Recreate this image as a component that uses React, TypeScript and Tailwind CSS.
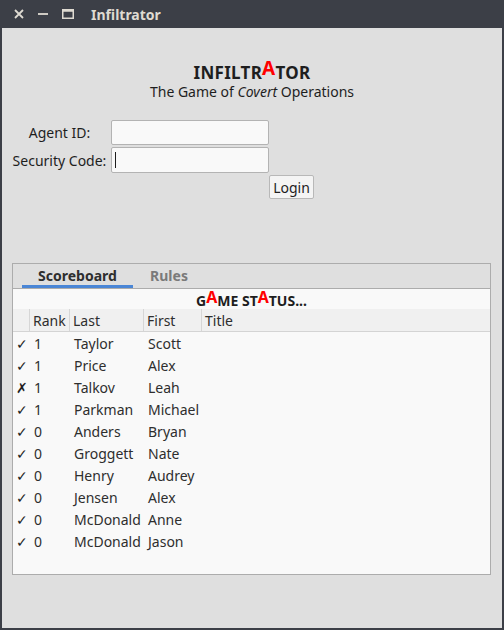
import React from "react";

const rows = [
  { ok: true, rank: "1", last: "Taylor", first: "Scott" },
  { ok: true, rank: "1", last: "Price", first: "Alex" },
  { ok: false, rank: "1", last: "Talkov", first: "Leah" },
  { ok: true, rank: "1", last: "Parkman", first: "Michael" },
  { ok: true, rank: "0", last: "Anders", first: "Bryan" },
  { ok: true, rank: "0", last: "Groggett", first: "Nate" },
  { ok: true, rank: "0", last: "Henry", first: "Audrey" },
  { ok: true, rank: "0", last: "Jensen", first: "Alex" },
  { ok: true, rank: "0", last: "McDonald", first: "Anne" },
  { ok: true, rank: "0", last: "McDonald", first: "Jason" },
];

export default function App() {
  return (
    <div
      className="w-[504px] h-[630px] bg-[#3c3f47] flex flex-col text-[#3c3c3c]"
      style={{ fontFamily: '"Noto Sans", "Open Sans", sans-serif' }}
    >
      {/* title bar */}
      <div className="h-[28px] flex items-center text-[#dfdbd2] shrink-0">
        <svg width="12" height="12" viewBox="0 0 12 12" className="ml-[13px]">
          <path d="M2 2L10 10M10 2L2 10" stroke="#dfdbd2" strokeWidth="1.8" />
        </svg>
        <svg width="12" height="12" viewBox="0 0 12 12" className="ml-[12px]">
          <path d="M1 6H11" stroke="#dfdbd2" strokeWidth="1.8" />
        </svg>
        <svg width="12" height="12" viewBox="0 0 12 12" className="ml-[13px]">
          <rect x="0.75" y="1.75" width="10.5" height="8.5" fill="none" stroke="#dfdbd2" strokeWidth="1.5" />
          <rect x="0.75" y="1.75" width="10.5" height="2" fill="#dfdbd2" />
        </svg>
        <span className="ml-[17px] text-[14px] font-bold">Infiltrator</span>
      </div>

      <div className="flex-1 mx-[2px] mb-[2px] bg-[#dfdfdf] flex flex-col">
        {/* heading */}
        <div className="flex flex-col items-center mt-[34px]">
          <div className="text-[17px] font-bold text-[#1e1e1e] leading-[20px] tracking-[0.3px]">
            INFILTR<span className="text-[#ff0000] relative top-[-4px] text-[19px]">A</span>TOR
          </div>
          <div className="text-[14px] leading-[18px] text-[#1e1e1e]">
            The Game of <i>Covert</i> Operations
          </div>
        </div>

        {/* login form */}
        <div className="mt-[19px] ml-[10px] grid grid-cols-[95px_158px] gap-x-[4px] gap-y-[2px] text-[14px] text-[#1e1e1e]">
          <div className="h-[25px] flex items-center justify-center">Agent ID:</div>
          <div className="h-[25px] bg-[#f9f9f9] border border-[#b3b3b3] rounded-[2px]" />
          <div className="h-[26px] flex items-center justify-center">Security Code:</div>
          <div className="h-[26px] bg-[#f9f9f9] border border-[#b3b3b3] rounded-[2px] flex items-center">
            <div className="ml-[3px] w-[1px] h-[16px] bg-[#1e1e1e]" />
          </div>
          <div />
          <div className="flex justify-end">
            <button className="h-[24px] w-[45px] bg-[#f4f4f4] border border-[#b8b8b8] rounded-[2px] text-[14px] text-[#1e1e1e] -mr-[45px]">
              Login
            </button>
          </div>
        </div>

        {/* tabs */}
        <div className="mt-[64px] ml-[10px] mr-[11px] h-[312px] border border-[#acacac] flex flex-col">
          <div className="h-[24px] flex items-end bg-[#dfdfdf] shrink-0">
            <div className="ml-[9px] w-[111px] h-full flex flex-col items-center justify-center border-b-[3px] border-[#4a86d6] pt-[2px]">
              <span className="text-[14px] font-bold text-[#2e2e2e] leading-none">Scoreboard</span>
            </div>
            <div className="w-[72px] h-full flex items-center justify-center border-b-[3px] border-transparent pt-[2px]">
              <span className="text-[14px] font-bold text-[#7a7a7a] leading-none">Rules</span>
            </div>
          </div>
          <div className="flex-1 bg-[#f9f9f9] border-t border-[#acacac] flex flex-col">
            <div className="h-[20px] flex items-end justify-center text-[14px] font-bold text-[#1e1e1e] leading-[17px]">
              G<span className="text-[#ff0000] relative top-[-3px] text-[16px]">A</span>ME ST
              <span className="text-[#ff0000] relative top-[-3px] text-[16px]">A</span>TUS...
            </div>
            <div className="h-[23px] bg-[#f0f0f0] border-b border-[#d4d4d4] grid grid-cols-[17px_40px_74px_58px_1fr] text-[14px] text-[#2e2e2e]">
              <div className="border-r border-[#d6d6d6]" />
              <div className="border-r border-[#d6d6d6] pl-[3px] flex items-center">Rank</div>
              <div className="border-r border-[#d6d6d6] pl-[3px] flex items-center">Last</div>
              <div className="border-r border-[#d6d6d6] pl-[3px] flex items-center">First</div>
              <div className="pl-[3px] flex items-center">Title</div>
            </div>
            {rows.map((r, i) => (
              <div key={i} className="h-[22px] grid grid-cols-[17px_40px_74px_58px_1fr] text-[14px] text-[#2e2e2e] items-center">
                <div className="pl-[3px] text-[14px] text-[#1e1e1e]">{r.ok ? "✓" : "✗"}</div>
                <div className="pl-[4px]">{r.rank}</div>
                <div className="pl-[4px]">{r.last}</div>
                <div className="pl-[4px]">{r.first}</div>
                <div />
              </div>
            ))}
          </div>
        </div>
      </div>
    </div>
  );
}
